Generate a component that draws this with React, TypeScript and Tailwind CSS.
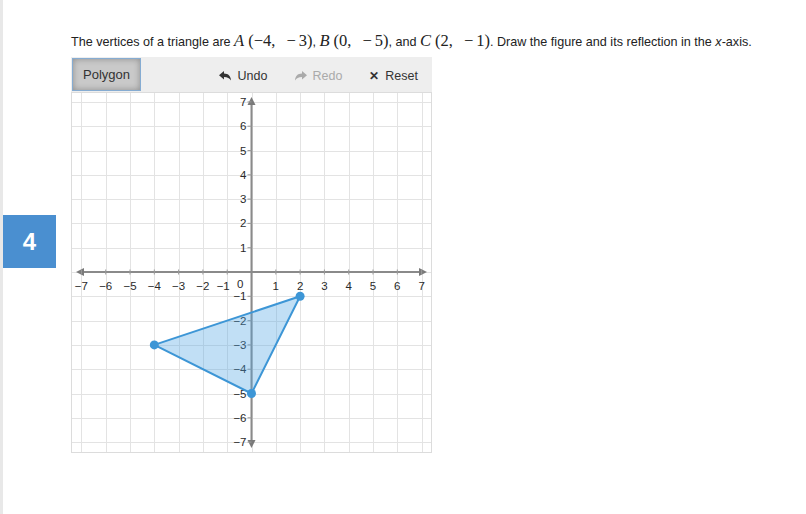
import React from "react";

const S = 24.3;
const OX = 180.5;
const OY = 180;
const W = 361;
const H = 361;

const px = (x: number) => OX + x * S;
const py = (y: number) => OY - y * S;

function Graph() {
  const ticks = [-7, -6, -5, -4, -3, -2, -1, 1, 2, 3, 4, 5, 6, 7];
  const all = [-7, -6, -5, -4, -3, -2, -1, 0, 1, 2, 3, 4, 5, 6, 7];
  const pts: [number, number][] = [
    [-4, -3],
    [0, -5],
    [2, -1],
  ];
  const poly = pts.map(([x, y]) => `${px(x)},${py(y)}`).join(" ");
  return (
    <svg width={W} height={H} viewBox={`0 0 ${W} ${H}`} className="block">
      <rect x={0.5} y={0.5} width={W - 1} height={H - 1} fill="#fff" stroke="#dcdcdc" />
      {all.map((v) => (
        <g key={"g" + v}>
          <line x1={Math.round(px(v)) + 0.5} y1={1} x2={Math.round(px(v)) + 0.5} y2={H - 1} stroke="#e3e3e3" />
          <line x1={1} y1={Math.round(py(v)) + 0.5} x2={W - 1} y2={Math.round(py(v)) + 0.5} stroke="#e3e3e3" />
        </g>
      ))}
      {/* axes */}
      <line x1={10} y1={OY} x2={W - 10} y2={OY} stroke="#8a8a8a" strokeWidth={2} />
      <line x1={OX} y1={10} x2={OX} y2={H - 10} stroke="#8a8a8a" strokeWidth={2} />
      <polygon points={`${5},${OY} ${13},${OY - 4} ${13},${OY + 4}`} fill="#7a7a7a" />
      <polygon points={`${W - 5},${OY} ${W - 13},${OY - 4} ${W - 13},${OY + 4}`} fill="#7a7a7a" />
      <polygon points={`${OX},${5} ${OX - 4},${13} ${OX + 4},${13}`} fill="#7a7a7a" />
      <polygon points={`${OX},${H - 5} ${OX - 4},${H - 13} ${OX + 4},${H - 13}`} fill="#7a7a7a" />
      {ticks.map((v) => (
        <g key={"t" + v}>
          <line x1={px(v)} y1={OY - 2.5} x2={px(v)} y2={OY + 2.5} stroke="#9a9a9a" strokeWidth={1} />
          <line x1={OX - 4} y1={py(v)} x2={OX} y2={py(v)} stroke="#9a9a9a" strokeWidth={1} />
        </g>
      ))}
      <g fontFamily="'Liberation Sans', Arial, sans-serif" fontSize={11.5} fill="#2a2a2a">
        {ticks.map((v) => (
          <text
            key={"xl" + v}
            x={v === -1 ? px(v) - 4 : px(v)}
            y={OY + 18}
            textAnchor="middle"
          >
            {v < 0 ? "\u2212" + -v : String(v)}
          </text>
        ))}
        {ticks.map((v) => (
          <text key={"yl" + v} x={OX - 5} y={py(v) + 4} textAnchor="end">
            {v < 0 ? "\u2212" + -v : String(v)}
          </text>
        ))}
        <text x={OX - 8} y={OY + 16} textAnchor="end">
          0
        </text>
      </g>
      <polygon
        points={poly}
        fill="rgba(78,162,226,0.35)"
        stroke="#3d96d6"
        strokeWidth={2}
        strokeLinejoin="round"
      />
      {pts.map(([x, y]) => (
        <circle key={`${x}${y}`} cx={px(x)} cy={py(y)} r={4.5} fill="#3d96d6" />
      ))}
    </svg>
  );
}

function UndoIcon({ flip = false, color }: { flip?: boolean; color: string }) {
  return (
    <svg
      width={12}
      height={10}
      viewBox="0 0 12 10"
      style={flip ? { transform: "scaleX(-1)" } : undefined}
    >
      <path d="M0 4.2 L5 0 V2.6 C9.5 2.6 11.8 5.4 12 9.6 C10.6 7.2 8.6 6 5 6 V8.6 Z" fill={color} />
    </svg>
  );
}

const M = "font-['Liberation_Serif',serif] text-[16.5px]";

function Pt({ L, a, b }: { L: string; a: string; b: string }) {
  return (
    <span className={M}>
      <i>{L}</i>
      <span className="ml-[4px]">({a},</span>
      <span className="ml-[11px]">−</span>
      <span className="ml-[3px]">{b})</span>
    </span>
  );
}

export default function App() {
  return (
    <div className="w-[806px] h-[514px] bg-white flex font-['Liberation_Sans',Arial,sans-serif] text-[#222]">
      <div className="w-[3px] h-full bg-[#e8e8e8]" />
      <div className="w-[53px] pt-[215px]">
        <div className="w-[53px] h-[53px] bg-[#4a8fd0] text-white text-[24px] font-bold flex items-center justify-center">
          4
        </div>
      </div>
      <div className="pl-[15px] pt-[30px] flex flex-col">
        <div className="h-[22px] leading-[22px] text-[12.6px] whitespace-nowrap">
          The vertices of a triangle are <Pt L="A" a="−4" b="3" />, <Pt L="B" a="0" b="5" />, and{" "}
          <Pt L="C" a="2" b="1" />. Draw the figure and its reflection in the <i>x</i>-axis.
        </div>
        <div className="mt-[5px] w-[361px] h-[35px] bg-[#eeeeee] flex items-center pl-[1px] pr-[14px] text-[12.5px]">
          <div className="w-[69px] h-[33px] pt-[1px] bg-[#c9c9c9] border border-[#86acd2] shadow-[inset_0_0_6px_rgba(0,0,0,0.3)] flex items-center justify-center text-[#333] text-[13px]">
            Polygon
          </div>
          <div className="ml-auto pt-[3px] flex items-center">
            <div className="flex items-center gap-[7px] text-[#333]">
              <UndoIcon color="#333" />
              <span>Undo</span>
            </div>
            <div className="ml-[28px] flex items-center gap-[5px] text-[#aaa]">
              <UndoIcon flip color="#aaa" />
              <span>Redo</span>
            </div>
            <div className="ml-[27px] flex items-center gap-[6px] text-[#333]">
              <span className="font-bold text-[12px]">✕</span>
              <span>Reset</span>
            </div>
          </div>
        </div>
        <Graph />
      </div>
    </div>
  );
}
